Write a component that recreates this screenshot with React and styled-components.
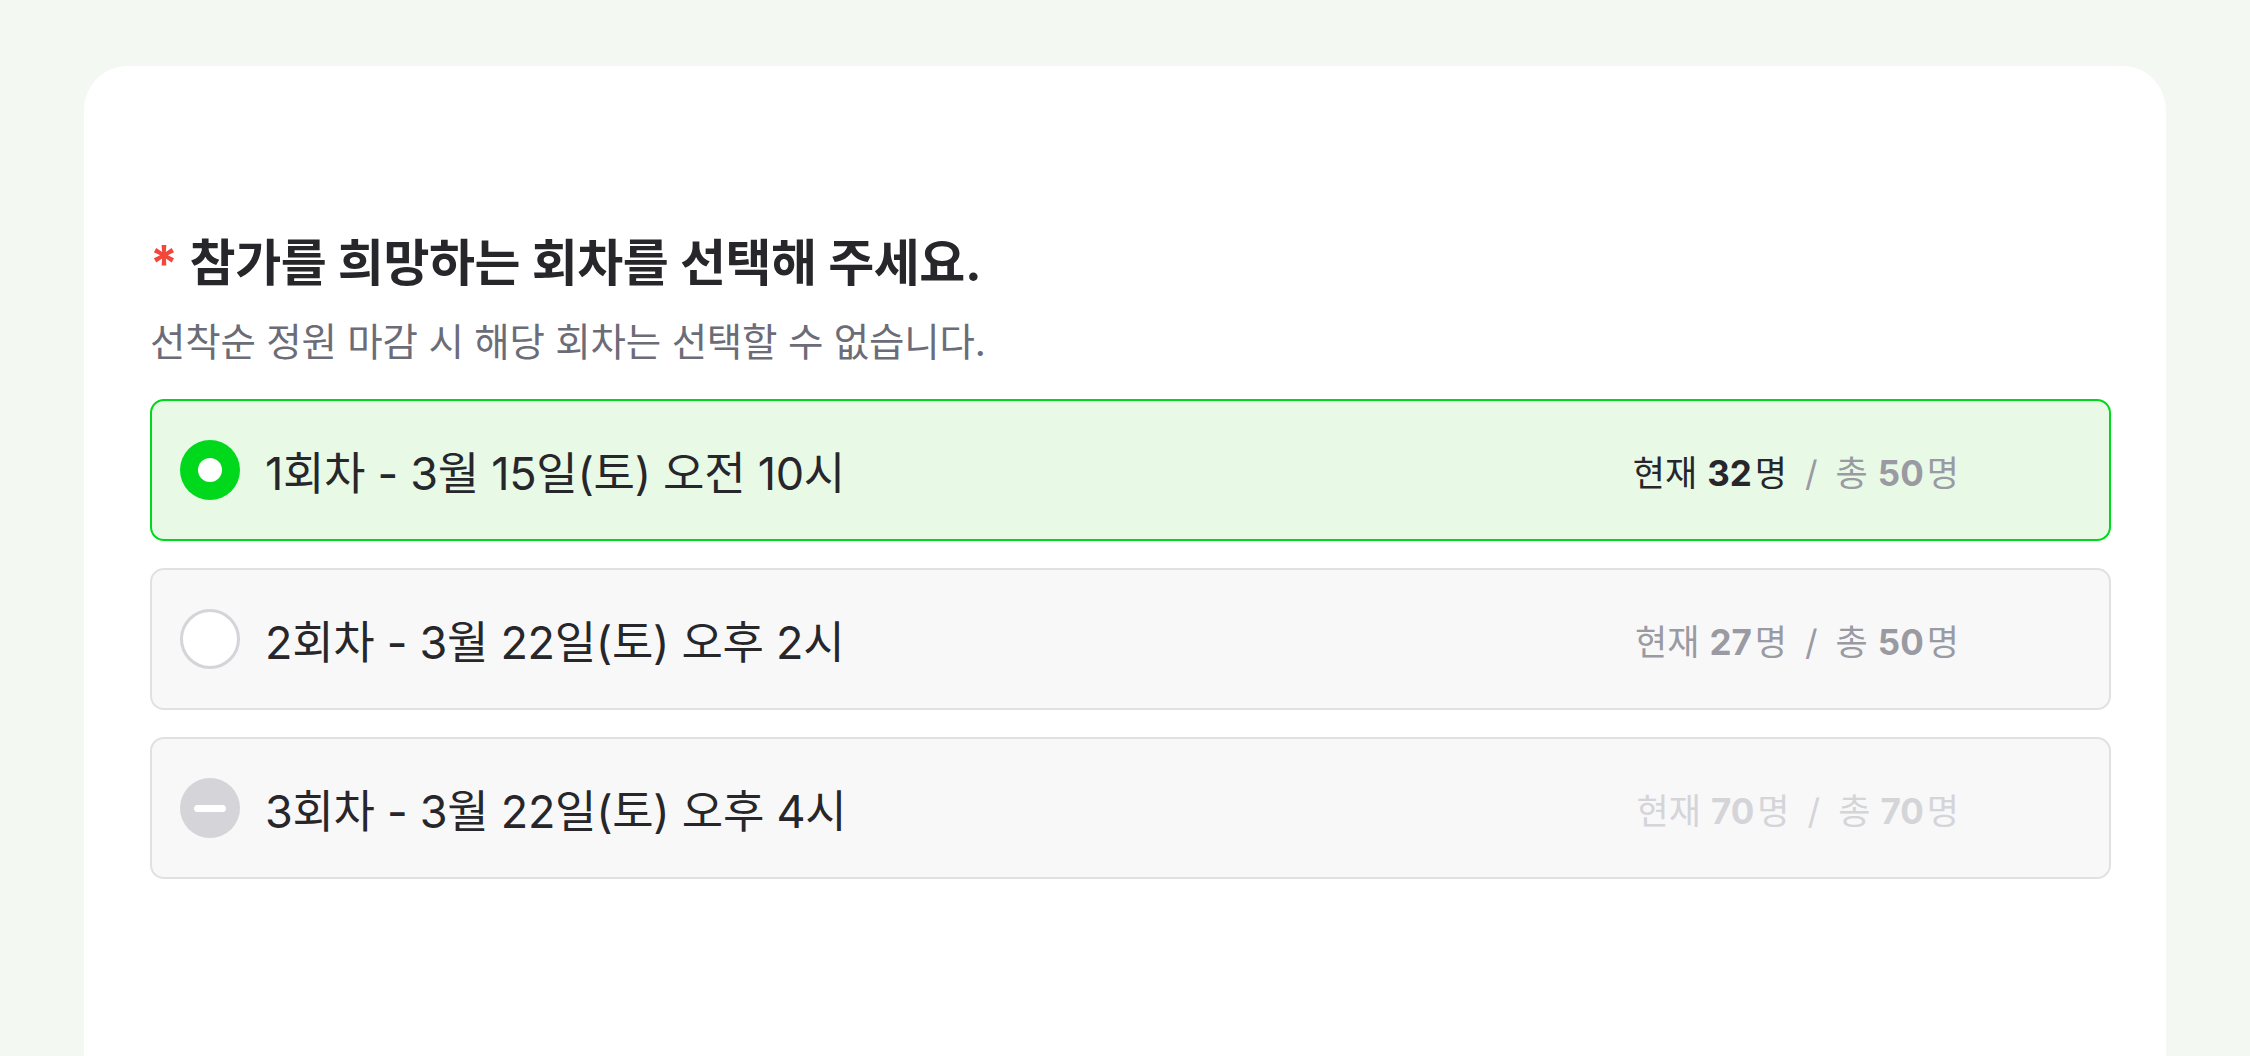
import React, { useState } from "react";
import styled, { createGlobalStyle } from "styled-components";

const green = "#00d81c";
const dark = "#26262b";
const muted = "#9a9aa3";
const faint = "#d4d4d9";

const GlobalStyle = createGlobalStyle`
  html, body {
    margin: 0;
    padding: 0;
    background: #f3f9f2;
    font-family: "Inter", "Noto Sans CJK KR", sans-serif;
  }
  * { box-sizing: border-box; }
`;

const Page = styled.div`
  height: 100vh;
  overflow: hidden;
  padding: 66px 84px 0;
`;

const Card = styled.section`
  background: #fff;
  border-radius: 44px;
  min-height: 1100px;
  padding: 165px 55px 0 66px;
`;

const Title = styled.h2`
  margin: 0;
  font-size: 50px;
  line-height: 64px;
  font-weight: 700;
  color: ${dark};
  letter-spacing: -0.4px;
`;

const Required = styled.span`
  color: #f2473a;
  margin-right: 12px;
`;

const Subtitle = styled.p`
  margin: 22px 0 32px;
  font-size: 38.5px;
  line-height: 50px;
  color: #6c6c78;
  letter-spacing: -0.2px;
`;

const List = styled.div`
  display: flex;
  flex-direction: column;
  gap: 27px;
`;

const Row = styled.div`
  height: 142px;
  display: flex;
  align-items: center;
  gap: 25px;
  padding: 0 150px 0 28px;
  border-radius: 14px;
  border: 2px solid ${(p) => (p.$selected ? green : "#e1e1e4")};
  background: ${(p) => (p.$selected ? "#e8f9e6" : "#f8f8f8")};
  cursor: ${(p) => (p.$disabled ? "default" : "pointer")};
`;

const Radio = styled.span`
  flex: none;
  width: 60px;
  height: 60px;
  border-radius: 50%;
  display: flex;
  align-items: center;
  justify-content: center;
  background: ${(p) =>
    p.$state === "selected" ? green : p.$state === "disabled" ? faint : "#fff"};
  border: ${(p) => (p.$state === "idle" ? `3px solid ${faint}` : "none")};
`;

const Dot = styled.span`
  width: 24px;
  height: 24px;
  border-radius: 50%;
  background: #fff;
`;

const Bar = styled.span`
  width: 32px;
  height: 7px;
  border-radius: 4px;
  background: #fff;
`;

const Label = styled.span`
  flex: 1;
  font-size: 45px;
  color: ${dark};
  letter-spacing: -0.3px;
`;

const Count = styled.div`
  display: flex;
  align-items: baseline;
  font-size: 35px;
  white-space: nowrap;
`;

const Part = styled.span`
  color: ${(p) => p.$color};
  b {
    font-weight: 700;
    margin: 0 3px 0 10px;
  }
`;

const Slash = styled.span`
  color: ${(p) => p.$color};
  margin: 0 18px;
`;

const sessions = [
  { id: 1, label: "1회차 - 3월 15일(토) 오전 10시", now: 32, total: 50 },
  { id: 2, label: "2회차 - 3월 22일(토) 오후 2시", now: 27, total: 50 },
  { id: 3, label: "3회차 - 3월 22일(토) 오후 4시", now: 70, total: 70 },
];

const App = () => {
  const [selected, setSelected] = useState(1);

  return (
    <>
      <GlobalStyle />
      <Page>
        <Card>
          <Title>
            <Required>*</Required>참가를 희망하는 회차를 선택해 주세요.
          </Title>
          <Subtitle>선착순 정원 마감 시 해당 회차는 선택할 수 없습니다.</Subtitle>
          <List>
            {sessions.map((s) => {
              const full = s.now >= s.total;
              const isSel = selected === s.id;
              const state = full ? "disabled" : isSel ? "selected" : "idle";
              const nowColor = full ? faint : isSel ? dark : muted;
              const restColor = full ? faint : muted;
              return (
                <Row
                  key={s.id}
                  $selected={isSel}
                  $disabled={full}
                  onClick={() => !full && setSelected(s.id)}
                >
                  <Radio $state={state}>
                    {state === "selected" && <Dot />}
                    {state === "disabled" && <Bar />}
                  </Radio>
                  <Label>{s.label}</Label>
                  <Count>
                    <Part $color={nowColor}>
                      현재<b>{s.now}</b>명
                    </Part>
                    <Slash $color={restColor}>/</Slash>
                    <Part $color={restColor}>
                      총<b>{s.total}</b>명
                    </Part>
                  </Count>
                </Row>
              );
            })}
          </List>
        </Card>
      </Page>
    </>
  );
};

export default App;
